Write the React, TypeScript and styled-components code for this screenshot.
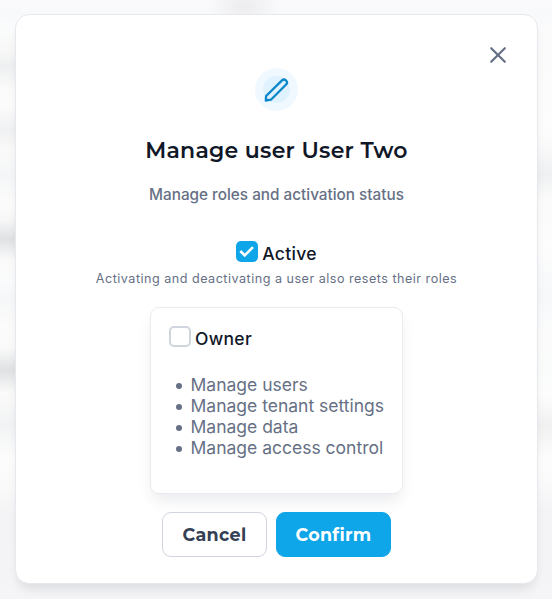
import React from "react";
import styled, { createGlobalStyle } from "styled-components";

const GlobalStyle = createGlobalStyle`
  * { box-sizing: border-box; }
  body { margin: 0; overflow: hidden; font-family: Inter, sans-serif; color: #101828; }
  h2, p, ul { margin: 0; padding: 0; }
`;

const Backdrop = styled.div`
  width: 100%;
  height: 599px;
  padding: 14px 14px 15px 15px;
  background:
    radial-gradient(ellipse 36px 22px at 244px 6px, #ececef 0%, rgba(236, 236, 239, 0) 100%),
    linear-gradient(#fafafb, #f8f9fb 14px, rgba(248, 249, 251, 0) 28px),
    linear-gradient(#f5f5f7, #f5f5f7) 0 100% / 100% 16px no-repeat,
    linear-gradient(
      #f9fafb 0, #fbfcfc 28px, #f8f8f8 50px, #eeeff0 66px, #fafafa 88px, #fcfcfc 105px,
      #f0f1f2 130px, #fafafa 150px, #f5f6f7 175px, #fcfcfc 205px, #f7f7f7 220px, #dfe1e3 239px,
      #fafafa 260px, #fafbfc 282px, #f6f7f8 298px, #fcfcfc 328px, #fafafa 348px, #dfe1e2 370px,
      #fafafa 393px, #f2f3f4 425px, #fdfdfd 460px, #fafafa 485px, #f4f4f6 515px, #f5f5f8 599px
    ) 0 0 / 50% 100% no-repeat,
    linear-gradient(
      #f9fafb 0, #fbfbfc 40px, #fdfdfd 125px, #fafafb 145px, #eff0f1 174px, #fbfbfb 200px,
      #fdfdfd 250px, #f8f9fa 275px, #f6f8f9 300px, #fcfcfc 335px, #fafbfb 360px, #fdfdfd 395px,
      #f1f1f2 425px, #fdfdfd 460px, #fafafb 485px, #f4f4f6 510px, #f5f5f8 599px
    ) 100% 0 / 50% 100% no-repeat;
`;

const Dialog = styled.section`
  position: relative;
  height: 570px;
  display: flex;
  flex-direction: column;
  align-items: center;
  padding-top: 53px;
  background: #fff;
  border: 1px solid #e7e8ed;
  border-radius: 14px;
  box-shadow: 0 8px 12px -4px rgba(16, 24, 40, 0.12);
`;

const CloseButton = styled.button`
  position: absolute;
  top: 28px;
  right: 27px;
  display: flex;
  padding: 0;
  border: 0;
  background: none;
  color: #667085;
`;

const IconHalo = styled.div`
  display: grid;
  place-items: center;
  width: 43px;
  height: 43px;
  border-radius: 50%;
  background: radial-gradient(circle, #e0f2fe 13px, #f0f9ff 14px);
  color: #0887cb;
`;

const Title = styled.h2`
  margin-top: 24px;
  white-space: nowrap;
  font: 600 22px/32px Montserrat, Inter, sans-serif;
  letter-spacing: 0.26px;
`;

const Subtitle = styled.p`
  margin-top: 16px;
  white-space: nowrap;
  color: #667085;
  font: 500 15.3px/24px Inter, sans-serif;
`;

const Choice = styled.label`
  display: flex;
  align-items: flex-start;
  gap: 4px;
  height: 25px;
  font: 500 17.5px/25px Inter, sans-serif;
  letter-spacing: 0.3px;
`;

const ActiveSection = styled.div`
  display: flex;
  flex-direction: column;
  align-items: center;
  margin-top: 34px;
`;

const CheckBox = styled.span<{ $checked?: boolean }>`
  display: grid;
  place-items: center;
  width: 22px;
  height: 21px;
  border: ${({ $checked }) => ($checked ? "0" : "2px solid #d0d5dd")};
  border-radius: 5px;
  background: ${({ $checked }) => ($checked ? "#0ea5e9" : "#fff")};
`;

const Hint = styled.p`
  margin-top: 4px;
  white-space: nowrap;
  color: #667085;
  font: 400 12.6px/18px Inter, sans-serif;
  letter-spacing: 0.49px;
`;

const RoleCard = styled.section`
  width: 253px;
  height: 187px;
  margin-top: 19px;
  padding: 18px;
  border: 1px solid #eaebef;
  border-radius: 9px;
  background: #fff;
  box-shadow: 0 9px 16px -3px rgba(16, 24, 40, 0.09);
`;

const Permissions = styled.ul`
  margin-top: 23px;
  list-style: none;
  color: #667085;
  font: 400 17.5px/21px Inter, sans-serif;
`;

const Permission = styled.li`
  display: flex;
  align-items: center;
  gap: 9px;
  padding-left: 6.5px;
  white-space: nowrap;
  &::before {
    content: "";
    flex: none;
    width: 6px;
    height: 6px;
    margin-top: 2px;
    border-radius: 50%;
    background: currentColor;
  }
`;

const Actions = styled.div`
  display: flex;
  gap: 9px;
  margin-top: 18px;
`;

const Button = styled.button<{ $primary?: boolean }>`
  width: ${({ $primary }) => ($primary ? "115px" : "105px")};
  height: 45px;
  padding: 0;
  border: 1px solid ${({ $primary }) => ($primary ? "#0ea5e9" : "#d0d5dd")};
  border-radius: 9px;
  background: ${({ $primary }) => ($primary ? "#0ea5e9" : "#fff")};
  color: ${({ $primary }) => ($primary ? "#fff" : "#344054")};
  font: 700 17.5px/24px Montserrat, Inter, sans-serif;
  letter-spacing: 0.3px;
`;

const permissions = ["Manage users", "Manage tenant settings", "Manage data", "Manage access control"];

export default function App() {
  return (
    <>
      <GlobalStyle />
      <Backdrop>
        <Dialog role="dialog" aria-labelledby="dialog-title">
          <CloseButton aria-label="Close">
            <svg width="24" height="24" viewBox="0 0 24 24" fill="none" stroke="currentColor" strokeWidth="2.2" strokeLinecap="round">
              <path d="M5.2 5.2 18.8 18.8M18.8 5.2 5.2 18.8" />
            </svg>
          </CloseButton>
          <IconHalo>
            <svg width="26" height="26" viewBox="0 0 26 26" fill="none" stroke="currentColor" strokeWidth="2.3" strokeLinejoin="round">
              <path d="M18 3.4a2.9 2.9 0 0 1 4.1 4.1L6.9 22.7 1.8 23.5l.3-4.5Z" />
            </svg>
          </IconHalo>
          <Title id="dialog-title">Manage user User Two</Title>
          <Subtitle>Manage roles and activation status</Subtitle>
          <ActiveSection>
            <Choice>
              <CheckBox $checked>
                <svg width="16" height="14" viewBox="0 0 16 14" fill="none" stroke="#fff" strokeWidth="2.6">
                  <path d="m1.3 6 4.4 4.4L14 2.1" />
                </svg>
              </CheckBox>
              Active
            </Choice>
            <Hint>Activating and deactivating a user also resets their roles</Hint>
          </ActiveSection>
          <RoleCard>
            <Choice><CheckBox />Owner</Choice>
            <Permissions>
              {permissions.map((item) => <Permission key={item}>{item}</Permission>)}
            </Permissions>
          </RoleCard>
          <Actions>
            <Button>Cancel</Button>
            <Button $primary>Confirm</Button>
          </Actions>
        </Dialog>
      </Backdrop>
    </>
  );
}
